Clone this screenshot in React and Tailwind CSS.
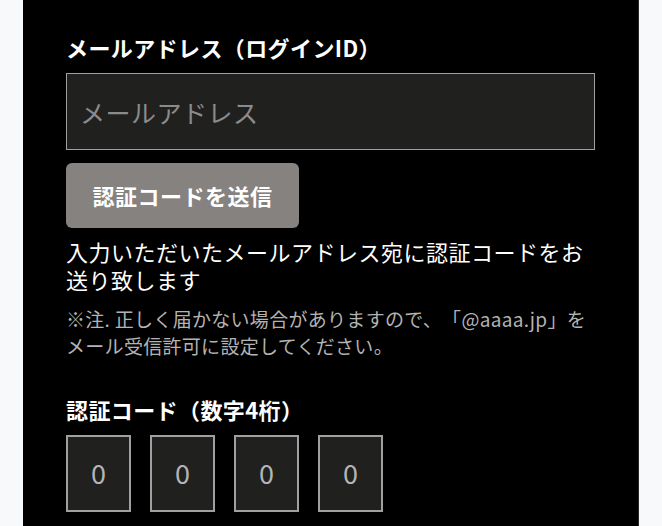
import React from 'react'

const App = () => {
  const digits = ['0', '0', '0', '0']

  return (
    <div
      className="min-h-screen w-full bg-[#f8f9fb] px-[23px] [text-spacing-trim:space-all]"
      style={{ fontFamily: '"Noto Sans CJK JP", "Noto Sans", sans-serif' }}
    >
      <div className="min-h-[526px] bg-black px-[43px] pt-[32px] border-r border-[#2a2a2a]">
        {/* Email */}
        <label className="block text-[22px] leading-[30px] font-bold tracking-[0.4px] text-white">
          メールアドレス（ログインID）
        </label>
        <input
          type="email"
          placeholder="メールアドレス"
          className="mt-[11px] block w-full h-[77px] border border-[#a0a0a0] bg-[#20211f] px-[13px] text-[25px] tracking-[0.5px] text-white placeholder:text-[#8b8b8b] outline-none"
        />

        <button className="mt-[13px] block w-[233px] h-[65px] rounded-[6px] bg-[#858280] text-[22px] font-bold tracking-[0.5px] text-white">
          認証コードを送信
        </button>

        <p className="mt-[9px] text-[22px] leading-[28px] tracking-[0.5px] text-white">
          入力いただいたメールアドレス宛に認証コードをお送り致します
        </p>
        <p className="mt-[12px] text-[19px] leading-[27px] tracking-[0.3px] text-[#b3b3b3]">
          ※注. 正しく届かない場合がありますので、「@aaaa.jp」をメール受信許可に設定してください。
        </p>

        {/* Code */}
        <label className="mt-[35px] block text-[22px] leading-[30px] font-bold tracking-[0.4px] text-white">
          認証コード（数字4桁）
        </label>
        <div className="mt-[11px] flex gap-[19px]">
          {digits.map((d, i) => (
            <div
              key={i}
              className="flex h-[77px] w-[65px] items-center justify-center border-2 border-[#a0a0a0] bg-[#20211f] text-[27px] text-[#b4b4b4]"
            >
              {d}
            </div>
          ))}
        </div>
      </div>
    </div>
  )
}

export default App
